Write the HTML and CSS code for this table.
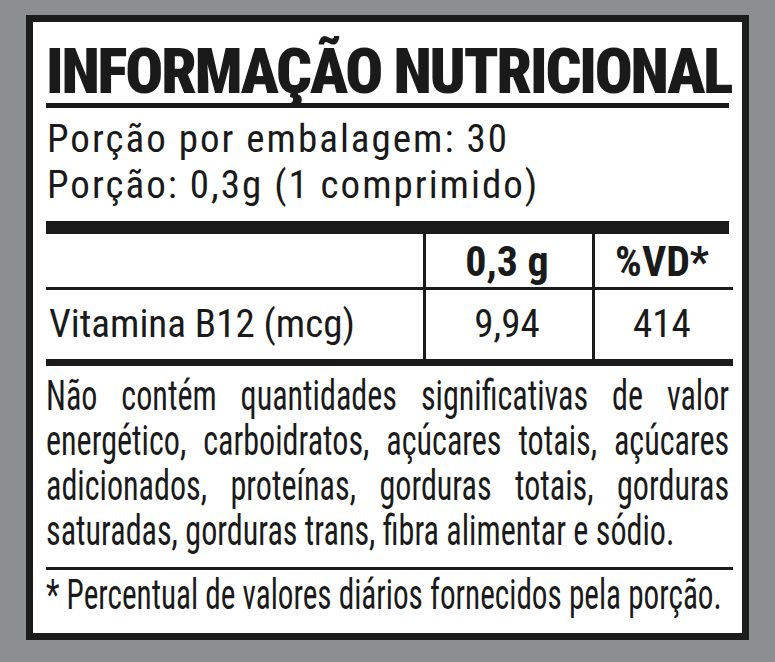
FILE: index.html
```html
<!DOCTYPE html>
<html lang="pt-BR">
<head>
<meta charset="utf-8">
<title>Informação Nutricional</title>
<link rel="stylesheet" href="styles.css">
</head>
<body>
<div class="label">
  <h1 class="title">INFORMAÇÃO NUTRICIONAL</h1>
  <div class="serving">
    <div class="serving-line">Porção por embalagem: 30</div>
    <div class="serving-line">Porção: 0,3g (1 comprimido)</div>
  </div>
  <div class="table">
    <div class="cell head"></div>
    <div class="cell head col num">0,3 g</div>
    <div class="cell head col num">%VD*</div>
    <div class="cell data name">Vitamina B12 (mcg)</div>
    <div class="cell data col num">9,94</div>
    <div class="cell data col num">414</div>
  </div>
  <div class="note">
    <p class="squeeze para">Não contém quantidades significativas de valor energético, carboidratos, açúcares totais, açúcares adicionados, proteínas, gorduras totais, gorduras saturadas, gorduras trans, fibra alimentar e sódio.</p>
  </div>
  <div class="foot">
    <p class="squeeze footnote">* Percentual de valores diários fornecidos pela porção.</p>
  </div>
</div>
</body>
</html>
```
FILE: styles.css
```css
html, body {
  margin: 0;
  padding: 0;
}
body {
  width: 775px;
  height: 662px;
  background: #8b8f8f;
  font-family: "Roboto Condensed", "Liberation Sans Narrow", sans-serif;
  color: #1a1a1a;
  overflow: hidden;
}
.label {
  box-sizing: border-box;
  width: 723px;
  height: 625px;
  margin: 15px 0 0 26px;
  border: 7px solid #1b1b1b;
  background: #ffffff;
  padding: 0 13px;
  overflow: hidden;
}
.title {
  margin: 0;
  padding-top: 18px;
  font-size: 63px;
  line-height: 63px;
  font-weight: 900;
  letter-spacing: -2.2px;
  white-space: nowrap;
  border-bottom: 5px solid #1b1b1b;
}
.serving {
  padding: 8px 0 13px 1px;
  border-bottom: 13px solid #1b1b1b;
}
.serving-line {
  font-size: 39px;
  line-height: 46px;
  letter-spacing: 2px;
  white-space: nowrap;
}
.table {
  display: grid;
  grid-template-columns: 377px 169px 1fr;
  grid-template-rows: 56px 69px;
  border-bottom: 7px solid #1b1b1b;
  margin-right: -4px;
}
.cell {
  white-space: nowrap;
}
.head {
  border-bottom: 3px solid #1b1b1b;
  font-size: 42px;
  line-height: 56px;
  font-weight: 700;
}
.data {
  font-size: 39px;
  line-height: 69px;
}
.col {
  border-left: 3px solid #1b1b1b;
}
.num {
  text-align: center;
  padding-right: 4px;
}
.name {
  padding-left: 3px;
}
.note {
  padding: 7px 0 14px;
  border-bottom: 3px solid #1b1b1b;
  margin-right: -4px;
}
.squeeze {
  margin: 0;
  width: 893px;
  transform: scaleX(0.765);
  transform-origin: 0 0;
  font-size: 42px;
  line-height: 45px;
}
.para {
  text-align: justify;
}
.foot {
  padding-top: 2px;
}
.footnote {
  white-space: nowrap;
  transform: scaleX(0.743);
}
```
